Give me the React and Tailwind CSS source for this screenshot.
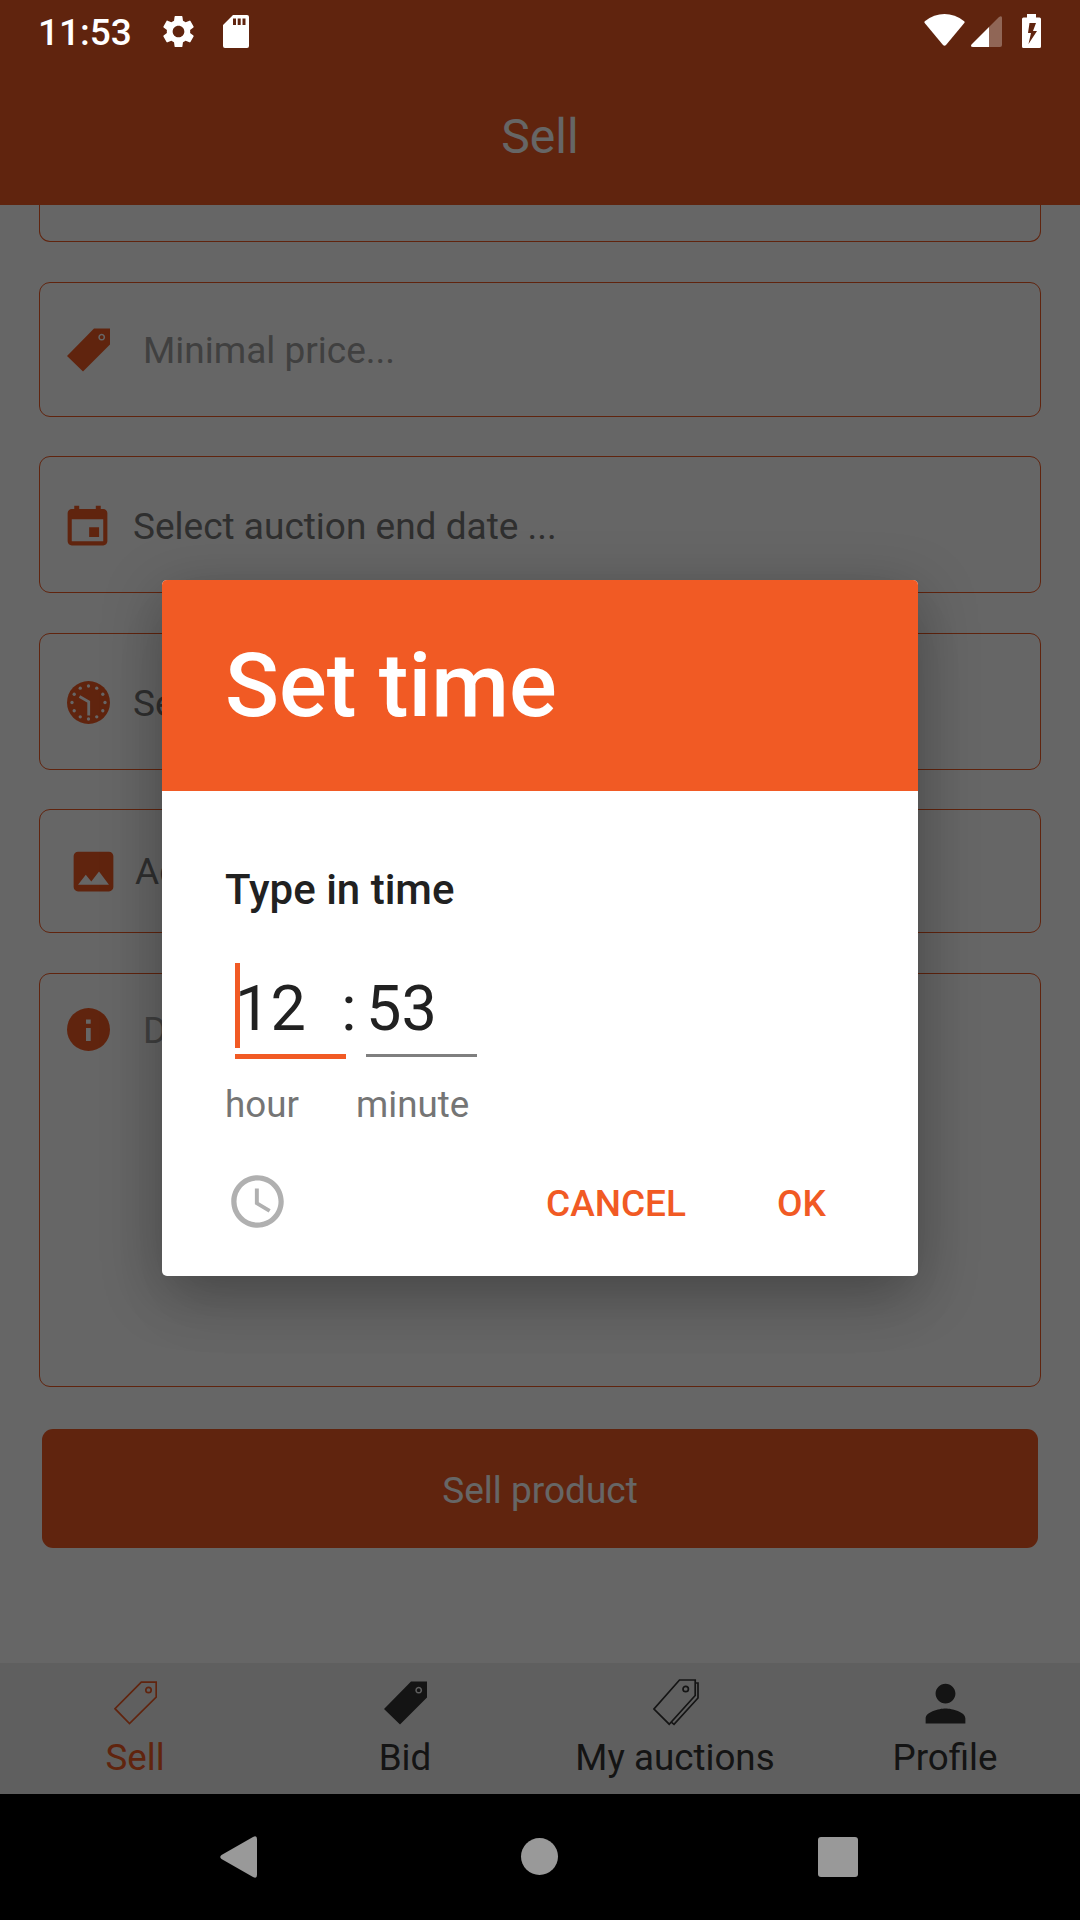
import React from "react";
import { IoMdCalendar, IoMdImage, IoMdPerson } from "react-icons/io";
import { MdSettings, MdAccessTime } from "react-icons/md";

function StatusBar() {
  return (
    <div className="absolute inset-x-0 top-0 z-20 flex h-[63px] items-center justify-between pl-[38px] pr-[39px] text-white">
      <div className="flex items-center">
        <span className="w-[121px] pt-[2px] text-[37px] font-medium leading-[43px]">11:53</span>
        <MdSettings className="size-[39px]" />
        <svg className="ml-[25px] h-[33px] w-[26px]" viewBox="0 0 26 33" fill="currentColor">
          <path fillRule="evenodd" d="M10 0H24a2 2 0 0 1 2 2V31a2 2 0 0 1-2 2H2a2 2 0 0 1-2-2V10ZM10 3.500V10h3V3.500ZM14.700 3.500V10h3V3.500ZM19.500 3.500V10h3V3.500Z" />
        </svg>
      </div>
      <div className="flex items-center pb-px">
        <svg className="h-[34px] w-[41px]" viewBox="0 0 41 34" fill="currentColor">
          <path d="M0.800 7.200C13-2.300 28-2.300 40.200 7.200Q41 8 40.300 9L22 31Q20.500 32.500 19 31L0.700 9Q0 8 0.800 7.200Z" />
        </svg>
        <svg className="ml-[6px] h-[34px] w-[31px]" viewBox="0 0 31 34" fill="currentColor">
          <path opacity=".3" d="M18 13 28 3Q31 1 31 4V31Q31 33 29 33H18Z" />
          <path d="M18 13V33H2Q-1 33 0.500 30.500Z" />
        </svg>
        <svg className="ml-[20px] h-[34px] w-[19px]" viewBox="0 0 19 34" fill="currentColor">
          <path fillRule="evenodd" d="M5 0H14V3.500H17.500Q19 3.500 19 5V32.500Q19 34 17.500 34H1.500Q0 34 0 32.500V5Q0 3.500 1.500 3.500H5ZM7.500 9 6 19H9L6.500 30 15 17H11L14 9Z" />
        </svg>
      </div>
    </div>
  );
}

function TagFilled({ className }) {
  return (
    <svg className={className} viewBox="0 0 43 44" fill="currentColor">
      <path fillRule="evenodd" d="M27 0.500H43V16.500L16 43.500 0 28ZM34.700 5.800a3.400 3.400 0 1 0 .01 0ZM34.700 7.300a1.900 1.900 0 1 1-.01 0Z" />
    </svg>
  );
}

function TagOutline({ className }) {
  return (
    <svg className={className} viewBox="0 0 43 44" fill="none" stroke="currentColor" strokeWidth="1.700">
      <path d="M27.300 1.200H42.200V16.200L15.500 42.500 1 27.700Z" />
      <circle cx="34.500" cy="9" r="2.700" />
    </svg>
  );
}

function TagsOutline({ className }) {
  return (
    <svg className={className} viewBox="0 0 46 47" fill="none" stroke="currentColor" strokeWidth="1.700">
      <path d="M26.500 1H42.200V16.500L16.200 45.200 1 30Z" />
      <path d="M42.500 4H45V19L21 45.300 18.300 43.200" />
      <circle cx="32.700" cy="10" r="2.700" />
    </svg>
  );
}

const CLOCK_DOTS = [
  [21.5, 5], [29.75, 7.2], [35.8, 13.25], [38, 21.5], [35.8, 29.75], [29.75, 35.8],
  [21.5, 38], [13.25, 35.8], [7.2, 29.75], [5, 21.5], [7.2, 13.25], [13.25, 7.2],
];

function ClockFilled({ className }) {
  return (
    <svg className={className} viewBox="0 0 43 43">
      <circle cx="21.5" cy="21.5" r="21.5" fill="currentColor" />
      {CLOCK_DOTS.map(([x, y]) => (
        <circle key={`${x}-${y}`} cx={x} cy={y} r="1.650" fill="#fff" />
      ))}
      <path d="M21.700 34.500V20.700L12.500 15.500" fill="none" stroke="#fff" strokeWidth="2.800" />
    </svg>
  );
}

function InfoFilled({ className }) {
  return (
    <svg className={className} viewBox="0 0 43 43">
      <circle cx="21.5" cy="21.5" r="21.5" fill="currentColor" />
      <path d="M19 11.500H23.700V15.800H19ZM19 20H23.700V33H19Z" fill="#fff" />
    </svg>
  );
}

function Field({ box, icon, children, text }) {
  return (
    <div className={`flex shrink-0 rounded-[11px] border border-[#f15a24] ${box}`}>
      {icon}
      <span className={`whitespace-nowrap text-[37px] leading-[43px] ${text}`}>{children}</span>
    </div>
  );
}

function Tab({ icon, label, active }) {
  return (
    <div className={`flex flex-1 flex-col items-center ${active ? "text-[#f15a24]" : "text-[#333333]"}`}>
      <div className="flex h-[73px] items-center justify-center pt-[6px]">{icon}</div>
      <span className="whitespace-nowrap leading-[43px]">{label}</span>
    </div>
  );
}

function SellScreen() {
  return (
    <div className="flex h-[1794px] flex-col bg-white">
      <header className="flex h-[205px] shrink-0 justify-center bg-[#f15a24] pt-[109px] text-[48px] leading-[56px] text-white">
        Sell
      </header>
      <main className="flex h-[1458px] shrink-0 flex-col px-[39px]">
        <div className="h-[37px] shrink-0 rounded-b-[11px] border border-t-0 border-[#f15a24]" />
        <Field box="mt-[40px] h-[135px] items-center pl-[27px]" text="ml-[33px] mt-[2px] text-[#a0a0a0]" icon={<TagFilled className="h-[44px] w-[43px] text-[#f15a24]" />}>
          Minimal price...
        </Field>
        <Field box="mt-[39px] h-[137px] items-center pl-[21px]" text="ml-[19px] mt-[3px] text-[#757575]" icon={<IoMdCalendar className="mt-px size-[53px] text-[#f15a24]" />}>
          Select auction end date ...
        </Field>
        <Field box="mt-[40px] h-[137px] items-center pl-[27px]" text="ml-[23px] mt-[3px] text-[#757575]" icon={<ClockFilled className="mt-px size-[43px] text-[#f15a24]" />}>
          Select auction end time ...
        </Field>
        <Field box="mt-[39px] h-[124px] items-center pl-[27px]" text="ml-[15px] mt-[1px] text-[#757575]" icon={<IoMdImage className="size-[53px] text-[#f15a24]" />}>
          Add photo
        </Field>
        <Field box="mt-[40px] h-[414px] items-start pl-[27px] pt-[34px]" text="ml-[33px] mt-[1px] text-[#a0a0a0]" icon={<InfoFilled className="size-[43px] text-[#f15a24]" />}>
          Description...
        </Field>
        <button className="mx-[3px] mt-[42px] h-[119px] shrink-0 rounded-[11px] bg-[#f15a24] pt-[3px] text-[37px] text-white">Sell product</button>
      </main>
      <nav className="flex h-[131px] shrink-0 bg-[#eeeeee]">
        <Tab active label="Sell" icon={<TagOutline className="h-[44px] w-[43px]" />} />
        <Tab label="Bid" icon={<TagFilled className="h-[44px] w-[43px]" />} />
        <Tab label="My auctions" icon={<TagsOutline className="ml-[2px] h-[47px] w-[46px]" />} />
        <Tab label="Profile" icon={<IoMdPerson className="ml-px mt-px size-[53px]" />} />
      </nav>
    </div>
  );
}

function TimeDialog() {
  return (
    <section className="h-[696px] w-[756px] overflow-hidden rounded-[5px] bg-white text-[#212121] shadow-[0_14px_60px_rgba(0,0,0,0.28),0_36px_60px_-10px_rgba(0,0,0,0.08)]">
      <h1 className="h-[211px] bg-[#f15a24] pl-[63px] pt-[53px] text-[89.25px] font-medium leading-[105px] text-white">Set time</h1>
      <div className="pl-[63px] pt-[74px]">
        <h2 className="text-[42px] font-medium leading-[49px]">Type in time</h2>
        <div className="mt-[49px] flex h-[96px] pl-[10px] text-[63px] leading-[74px]">
          <div className="h-full w-[111px] border-b-[5px] border-[#f15a24]">
            <div className="flex h-[85px] items-center border-l-[5px] border-[#f15a24] pt-[6px]">
              <span className="-ml-[5px]">12</span>
            </div>
          </div>
          <span className="-ml-[7px] mr-[7px] w-[20px] pt-[9px] text-center">:</span>
          <div className="h-[94px] w-[111px] border-b-[3px] border-[#7f7f7f] pt-[9px]">53</div>
        </div>
        <div className="mt-[24px] flex leading-[43px] text-[#757575]">
          <span className="w-[131px]">hour</span>
          <span>minute</span>
        </div>
        <div className="mt-[44px] flex h-[63px] items-center text-[37px] font-medium text-[#f15a24]">
          <MdAccessTime className="ml-px size-[63px] text-[#b0b0b0]" />
          <button className="ml-[257px] pt-[3px]">CANCEL</button>
          <button className="ml-[91px] pt-[3px]">OK</button>
        </div>
      </div>
    </section>
  );
}

function SystemBar() {
  return (
    <div className="flex h-[126px] items-center bg-black pb-px pl-[220px] text-[#999999]">
      <svg className="h-[42px] w-[37px]" viewBox="0 0 37 42" fill="currentColor">
        <path d="M1.500 19 33 1Q37-1 37 3V39Q37 43 33 41L1.500 23Q-1 21 1.500 19Z" />
      </svg>
      <div className="ml-[264px] size-[37px] rounded-full bg-[#999999]" />
      <div className="ml-[260px] size-[40px] rounded-[3px] bg-[#999999]" />
    </div>
  );
}

export default function App() {
  return (
    <div className="relative h-[1920px] w-[1080px] overflow-hidden bg-white font-['Roboto',sans-serif] text-[36.75px] leading-[43px]">
      <SellScreen />
      <SystemBar />
      <div className="absolute inset-x-0 top-0 z-10 flex h-[1794px] justify-center bg-black/60 pt-[580px]">
        <TimeDialog />
      </div>
      <StatusBar />
    </div>
  );
}
